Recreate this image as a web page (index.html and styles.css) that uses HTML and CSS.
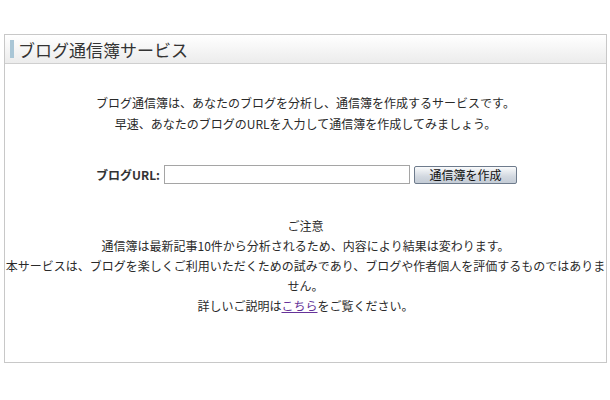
FILE: index.html
```html
<!DOCTYPE html>
<html>
<head>
	<meta charset="utf-8">
	<title>ブログ通信簿サービス</title>
	<link rel="stylesheet" href="styles.css">
</head>
<body>
	<div class="box">
		<h2 class="box-title"><span class="bar"></span>ブログ通信簿サービス</h2>
		<div class="box-body">
			<p class="intro">
				ブログ通信簿は、あなたのブログを分析し、通信簿を作成するサービスです。<br>
				早速、あなたのブログのURLを入力して通信簿を作成してみましょう。
			</p>
			<form class="url-form" onsubmit="return false;">
				<label for="blogUrl">ブログURL:</label>
				<input type="text" id="blogUrl" class="url-input">
				<button type="submit" class="make-btn">通信簿を作成</button>
			</form>
			<p class="notes">
				ご注意<br>
				通信簿は最新記事10件から分析されるため、内容により結果は変わります。<br>
				本サービスは、ブログを楽しくご利用いただくための試みであり、ブログや作者個人を評価するものではありません。<br>
				詳しいご説明は<a href="#">こちら</a>をご覧ください。
			</p>
		</div>
	</div>
</body>
</html>
```

FILE: styles.css
```css
body {
	margin: 0;
	padding: 34px 0 0 4px;
	background: #fff;
	font-family: "Noto Sans CJK JP", "Liberation Sans", sans-serif;
	font-size: 12px;
	color: #2a2a2a;
}

.box {
	width: 601px;
	border: 1px solid #c8c8c8;
}

.box-title {
	display: flex;
	align-items: center;
	margin: 0;
	height: 28px;
	padding-left: 5px;
	border-bottom: 1px solid #cfcfcf;
	background: linear-gradient(#ffffff, #ececec);
	font-size: 17px;
	font-weight: normal;
	color: #333;
}
.bar {
	width: 4px;
	height: 18px;
	margin-right: 4px;
	background: #a9c6d6;
}

.box-body {
	padding: 28px 0 46px;
	text-align: center;
}

.intro {
	margin: 0;
	line-height: 21px;
}

.url-form {
	display: flex;
	justify-content: center;
	align-items: center;
	gap: 4px;
	margin: 31px 0 32px;
	padding-left: 2px;
}
.url-form label {
	font-weight: bold;
	color: #333;
}
.url-input {
	width: 244px;
	height: 17px;
	padding: 0;
	border: 1px solid #a5a5a5;
}
.make-btn {
	width: 103px;
	height: 18px;
	padding: 0;
	border: 1px solid #6e7b8c;
	border-radius: 2px;
	background: linear-gradient(#fafbfc, #d2d8e0 60%, #c4ccd6);
	font-family: inherit;
	font-size: 12px;
	line-height: 14px;
	color: #111;
}

.notes {
	margin: 0;
	line-height: 20px;
}
.notes a {
	color: #663399;
}
```
